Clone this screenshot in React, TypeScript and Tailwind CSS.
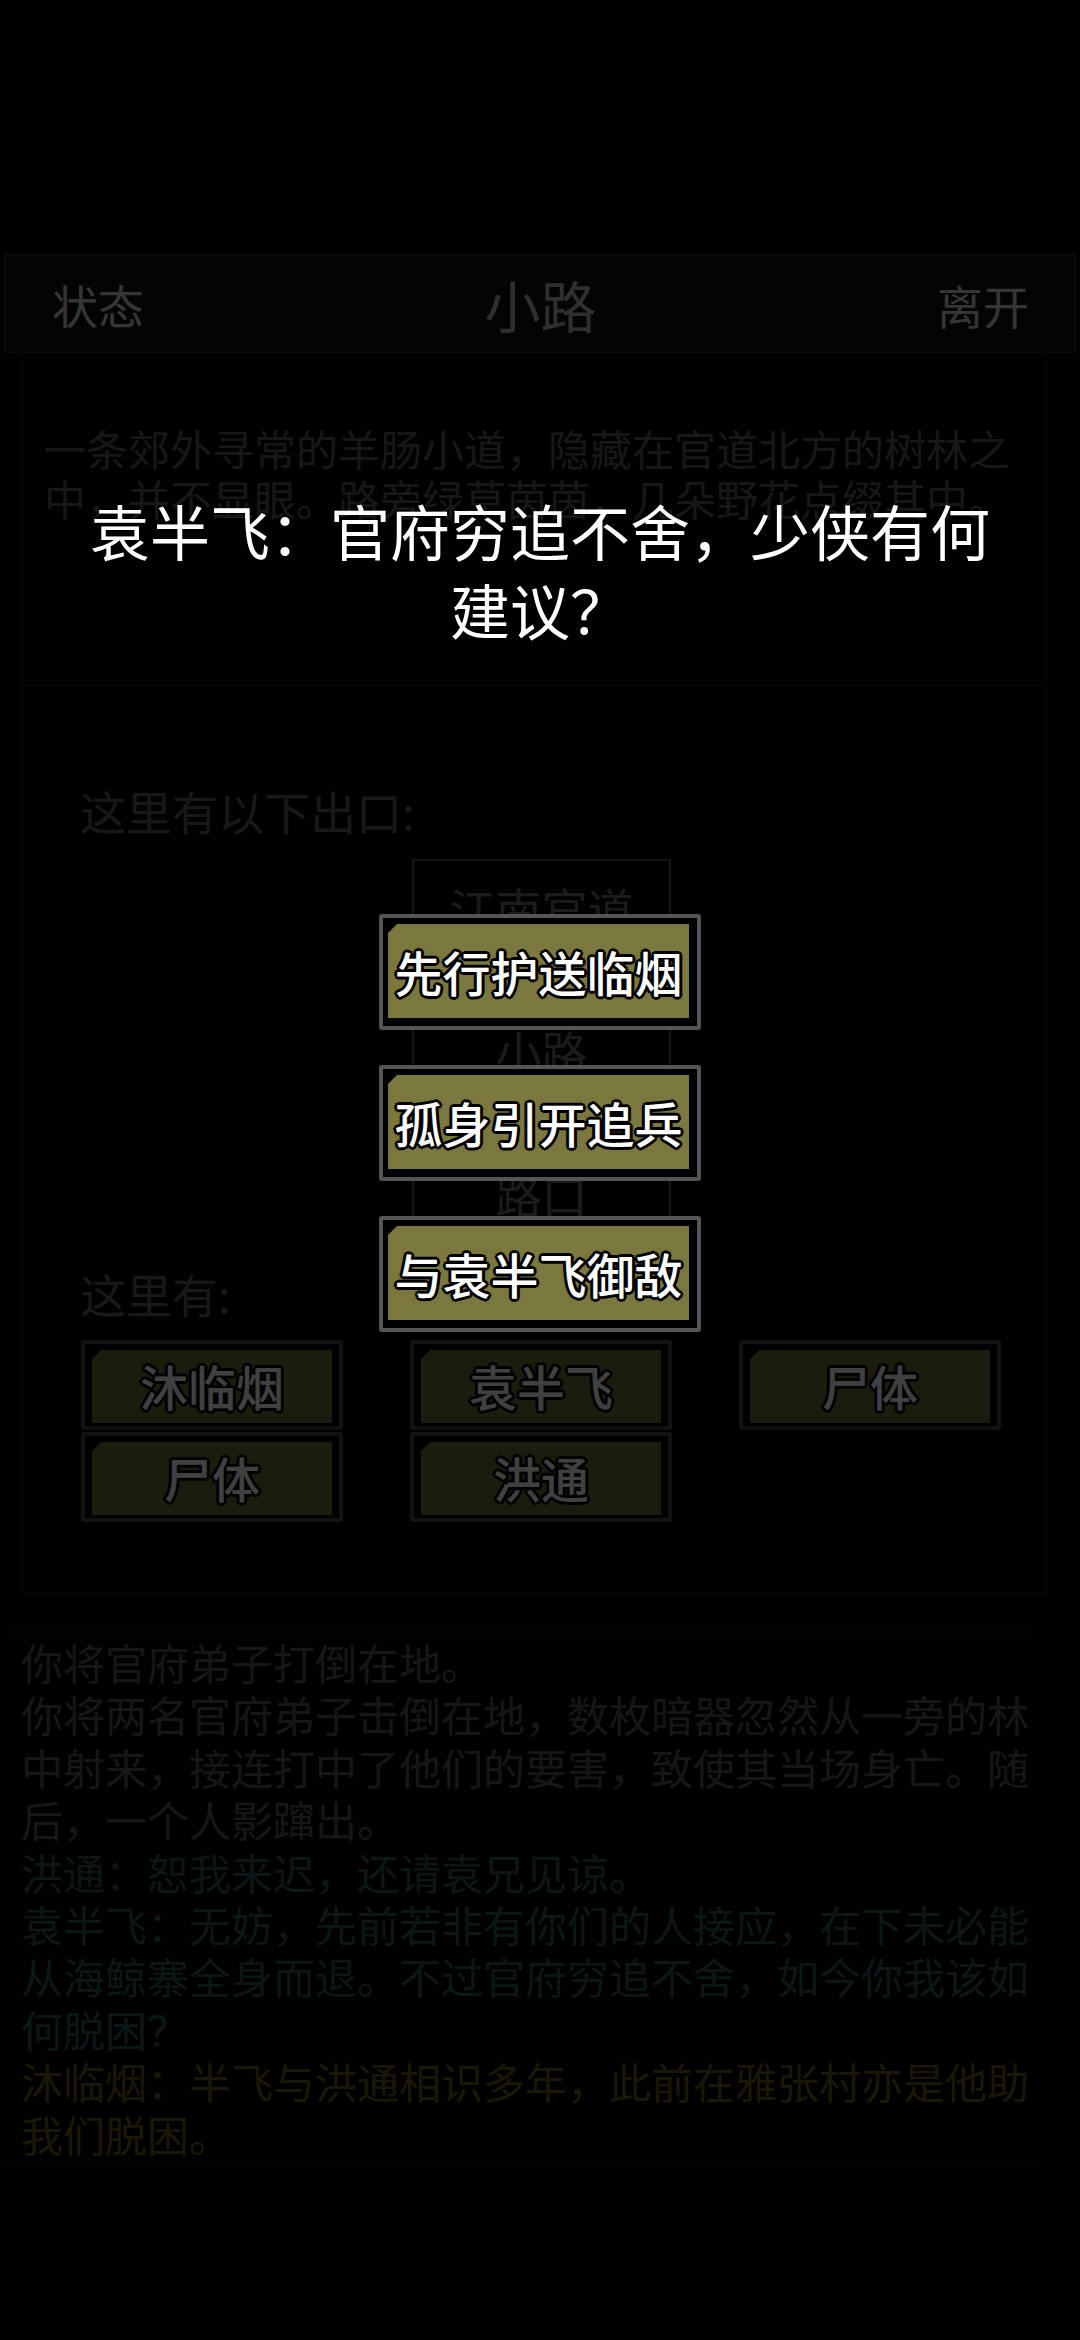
import * as React from 'react';

// --------------------------------
// Data
// --------------------------------
const choices = ['先行护送临烟', '孤身引开追兵', '与袁半飞御敌'];

const npcs = ['沐临烟', '袁半飞', '尸体', '尸体', '洪通'];

const exits = ['江南官道', '小路', '路口'];

type LogLine = { text: string; tone: 'plain' | 'npc' | 'ally' };

const logLines: LogLine[] = [
  { text: '你将官府弟子打倒在地。', tone: 'plain' },
  {
    text: '你将两名官府弟子击倒在地，数枚暗器忽然从一旁的林中射来，接连打中了他们的要害，致使其当场身亡。随后，一个人影蹿出。',
    tone: 'plain',
  },
  { text: '洪通：恕我来迟，还请袁兄见谅。', tone: 'npc' },
  {
    text: '袁半飞：无妨，先前若非有你们的人接应，在下未必能从海鲸寨全身而退。不过官府穷追不舍，如今你我该如何脱困？',
    tone: 'npc',
  },
  { text: '沐临烟：半飞与洪通相识多年，此前在雅张村亦是他助我们脱困。', tone: 'ally' },
];

const toneClass = {
  plain: 'text-[#5a5a5a]',
  npc: 'text-[#2f5a5a]',
  ally: 'text-[#6e5e18]',
};

// outlined white label text used on the olive buttons
const outlined =
  'text-white font-medium leading-none [text-shadow:3px_0_0_#000,-3px_0_0_#000,0_3px_0_#000,0_-3px_0_#000,2px_2px_0_#000,-2px_-2px_0_#000,2px_-2px_0_#000,-2px_2px_0_#000]';

// --------------------------------
// Components
// --------------------------------
const NpcButton = ({ label }: { label: string }) => (
  <div className="h-[90px] border-[4px] border-[#4a4a4a] rounded-[3px] bg-black pt-[6px] px-[7px] pb-[3px]">
    <div className="h-full bg-[#6e6b38] [clip-path:polygon(9px_0,100%_0,100%_100%,0_100%,0_9px)] flex items-center justify-center">
      <span className={`text-[48px] -mt-[4px] ${outlined}`}>{label}</span>
    </div>
  </div>
);

const ChoiceButton = ({ label }: { label: string }) => (
  <button
    type="button"
    className="block w-[322px] h-[116px] border-[4px] border-[#555555] rounded-[3px] bg-black pt-[6px] pl-[5px] pr-[8px] pb-[8px]"
  >
    <div className="h-full bg-[#7a773f] [clip-path:polygon(9px_0,100%_0,100%_100%,0_100%,0_9px)] flex items-center justify-center">
      <span className={`text-[48px] ${outlined}`}>{label}</span>
    </div>
  </button>
);

export default function App() {
  return (
    <div className="relative w-[1080px] h-[2340px] bg-black overflow-hidden font-['Noto_Sans_CJK_SC','Noto_Sans',sans-serif]">
      {/* top blank area */}
      <div className="h-[254px]" />

      {/* header bar */}
      <div className="ml-[4px] w-[1072px] h-[99px] border-2 border-[#2a2a2a] bg-[#101010] flex items-center justify-between pl-[46px] pr-[45px]">
        <span className="text-[46px] leading-none text-[#d4d4d4]">状态</span>
        <span className="text-[56px] leading-none text-[#bcbcbc]">小路</span>
        <span className="text-[46px] leading-none text-[#d4d4d4]">离开</span>
      </div>

      {/* scene panel */}
      <div className="ml-[21px] w-[1026px] border-x-2 border-b-2 border-[#141414] pb-[71px]">
        <div className="h-[333px] pt-[70px] pl-[21px] border-b-2 border-[#181818]">
          <p className="w-[985px] text-[42px] leading-[50px] text-[#5e5e5e]">
            一条郊外寻常的羊肠小道，隐藏在官道北方的树林之中，并不显眼。路旁绿草茵茵，几朵野花点缀其中。
          </p>
        </div>

        <div className="mt-[96px] pl-[57px] text-[46px] leading-[56px] text-[#606060]">
          这里有以下出口:
        </div>

        <div className="mt-[21px] ml-[389px] w-[259px] border-2 border-[#2c6a6a] border-t-[#4a4a4a] pt-[18px] pb-[18px] flex flex-col items-center gap-[87px]">
          {exits.map((e) => (
            <span key={e} className="text-[46px] leading-[56px] text-[#6e6e6e]">
              {e}
            </span>
          ))}
        </div>

        <div className="mt-[24px] pl-[57px] text-[46px] leading-[56px] text-[#606060]">这里有:</div>

        <div className="mt-[19px] ml-[58px] w-[920px] grid grid-cols-3 gap-x-[67px] gap-y-[2px]">
          {npcs.map((n, i) => (
            <NpcButton key={i} label={n} />
          ))}
        </div>
      </div>

      {/* message log */}
      <div className="mt-[36px] ml-[5px] w-[1030px] border-y-2 border-[#161616] pt-[3px] pb-[2px] pl-[16px]">
        <div className="w-[1012px] text-[42px] leading-[52.4px]">
          {logLines.map((l, i) => (
            <p key={i} className={toneClass[l.tone]}>
              {l.text}
            </p>
          ))}
        </div>
      </div>

      {/* dialog overlay */}
      <div className="absolute inset-0 bg-black/75 flex flex-col items-center pt-[490px]">
        <h2 className="w-[930px] text-center text-[60px] leading-[79px] font-normal text-white">
          袁半飞：官府穷追不舍，少侠有何建议？
        </h2>
        <div className="mt-[266px] flex flex-col gap-[35px]">
          {choices.map((c) => (
            <ChoiceButton key={c} label={c} />
          ))}
        </div>
      </div>
    </div>
  );
}
